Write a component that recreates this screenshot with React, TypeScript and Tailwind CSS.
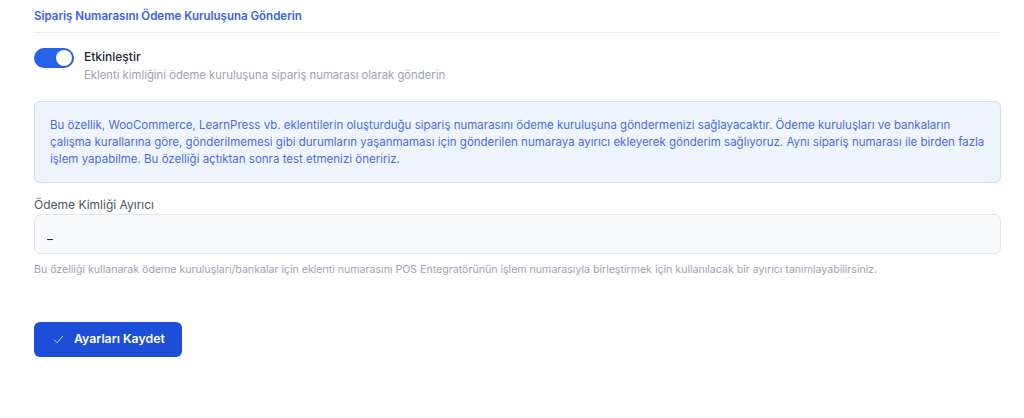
import React, { useState } from 'react';

const App: React.FC = () => {
  const [enabled, setEnabled] = useState(true);
  const [separator, setSeparator] = useState('_');

  return (
    <div className="min-h-[418px] bg-white pl-[34px] pr-[23px] pt-[9px] font-['Inter','Noto_Sans',sans-serif] antialiased">
      {/* Section header */}
      <div className="border-b border-[#eceef1] pb-[8px]">
        <h2 className="text-[11.5px] font-semibold leading-[15px] text-[#3563ea]">
          Sipariş Numarasını Ödeme Kuruluşuna Gönderin
        </h2>
      </div>

      {/* Toggle */}
      <div className="mt-[15px] flex items-start">
        <button
          onClick={() => setEnabled(!enabled)}
          className={`relative h-[20px] w-[40px] shrink-0 rounded-full transition-colors ${
            enabled ? 'bg-[#2563eb]' : 'bg-gray-300'
          }`}
        >
          <span
            className={`absolute top-[2px] h-[16px] w-[16px] rounded-full bg-white shadow-sm transition-all ${
              enabled ? 'left-[22px]' : 'left-[2px]'
            }`}
          />
        </button>
        <div className="ml-[10px]">
          <div className="text-[12px] font-medium leading-[17px] text-[#1f2937]">Etkinleştir</div>
          <div className="mt-[3px] text-[11.3px] leading-[15px] text-[#9ca3af]">
            Eklenti kimliğini ödeme kuruluşuna sipariş numarası olarak gönderin
          </div>
        </div>
      </div>

      {/* Info box */}
      <div className="mt-[18px] rounded-md border border-[#c9dcfb] bg-[#eff5ff] px-[15px] pb-[14px] pt-[15px]">
        <p className="text-[11.5px] leading-[17px] text-[#4a6ae6]">
          Bu özellik, WooCommerce, LearnPress vb. eklentilerin oluşturduğu sipariş numarasını ödeme kuruluşuna göndermenizi sağlayacaktır. Ödeme kuruluşları ve bankaların çalışma kurallarına göre, gönderilmemesi gibi durumların yaşanmaması için gönderilen numaraya ayırıcı ekleyerek gönderim sağlıyoruz. Aynı sipariş numarası ile birden fazla işlem yapabilme. Bu özelliği açtıktan sonra test etmenizi öneririz.
        </p>
      </div>

      {/* Separator field */}
      <div className="mt-[14px]">
        <label className="block text-[12px] leading-[16px] text-[#4b5563]">Ödeme Kimliği Ayırıcı</label>
        <input
          value={separator}
          onChange={(e) => setSeparator(e.target.value)}
          className="mt-[1px] block h-[40px] w-full rounded-md border border-[#e3e6ea] bg-[#f9fafb] px-[12px] text-[13px] text-[#1f2937] outline-none"
        />
        <p className="mt-[8px] text-[10.6px] leading-[15px] text-[#9ca3af]">
          Bu özelliği kullanarak ödeme kuruluşları/bankalar için eklenti numarasını POS Entegratörünün işlem numarasıyla birleştirmek için kullanılacak bir ayırıcı tanımlayabilirsiniz.
        </p>
      </div>

      {/* Save button */}
      <button className="mt-[45px] flex h-[35px] items-center rounded-md bg-[#1d4ed8] pl-[19px] pr-[17px] text-[12.3px] font-semibold text-white">
        <svg viewBox="0 0 24 24" className="mr-[10px] h-[11px] w-[11px]" fill="none" stroke="currentColor" strokeWidth="1.8" strokeLinecap="round" strokeLinejoin="round">
          <path d="M3 13l6 6L21 5" />
        </svg>
        Ayarları Kaydet
      </button>
    </div>
  );
};

export default App;
